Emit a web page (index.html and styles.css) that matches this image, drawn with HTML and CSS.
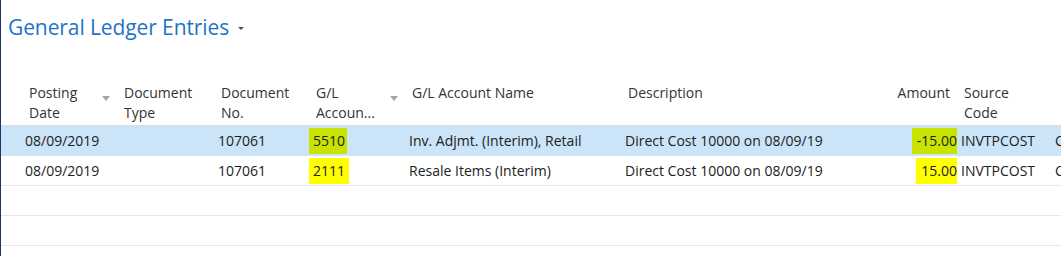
FILE: index.html
```html
<!DOCTYPE html>
<html lang="en">
<head>
    <meta charset="UTF-8">
    <title>General Ledger Entries</title>
    <link rel="stylesheet" href="styles.css">
</head>
<body>
    <div class="page">
        <div class="title-bar">
            <h1>General Ledger Entries</h1>
            <span class="title-caret"></span>
        </div>

        <table class="entries">
            <colgroup>
                <col class="c-date">
                <col class="c-type">
                <col class="c-docno">
                <col class="c-acc">
                <col class="c-name">
                <col class="c-desc">
                <col class="c-amt">
                <col class="c-src">
                <col class="c-more">
            </colgroup>
            <thead>
                <tr>
                    <th class="first"><div class="th-in"><span>Posting<br>Date</span><i class="sort"></i></div></th>
                    <th>Document<br>Type</th>
                    <th>Document<br>No.</th>
                    <th><div class="th-in"><span>G/L<br>Accoun...</span><i class="sort"></i></div></th>
                    <th>G/L Account Name</th>
                    <th>Description</th>
                    <th class="num">Amount</th>
                    <th>Source<br>Code</th>
                    <th></th>
                </tr>
            </thead>
            <tbody>
                <tr class="selected">
                    <td class="first">08/09/2019</td>
                    <td></td>
                    <td>107061</td>
                    <td><span class="mark mark-a">5510</span></td>
                    <td>Inv. Adjmt. (Interim), Retail</td>
                    <td>Direct Cost 10000 on 08/09/19</td>
                    <td class="num"><span class="mark mark-c">-15.00</span></td>
                    <td>INVTPCOST</td>
                    <td>C</td>
                </tr>
                <tr>
                    <td class="first">08/09/2019</td>
                    <td></td>
                    <td>107061</td>
                    <td><span class="mark mark-b">2111</span></td>
                    <td>Resale Items (Interim)</td>
                    <td>Direct Cost 10000 on 08/09/19</td>
                    <td class="num"><span class="mark mark-d">15.00</span></td>
                    <td>INVTPCOST</td>
                    <td>C</td>
                </tr>
                <tr class="empty"><td colspan="9"></td></tr>
                <tr class="empty"><td colspan="9"></td></tr>
            </tbody>
        </table>
    </div>
</body>
</html>
```

FILE: styles.css
```css
body {
    margin: 0;
    font-family: "Open Sans", "Noto Sans", Arial, sans-serif;
    background: #fff;
    color: #212121;
}
.page {
    width: 1060px;
    height: 256px;
    border-left: 1px solid #1f3566;
    overflow: hidden;
}
.title-bar {
    display: flex;
    align-items: center;
    padding: 11px 0 0 7px;
    height: 32px;
}
h1 {
    margin: 0;
    font-size: 21px;
    font-weight: 400;
    color: #1e73c8;
    letter-spacing: -0.1px;
}
.title-caret {
    width: 0;
    height: 0;
    margin: 2px 0 0 9px;
    border-left: 3px solid transparent;
    border-right: 3px solid transparent;
    border-top: 3px solid #555;
}
.entries {
    margin-top: 35px;
    table-layout: fixed;
    border-collapse: collapse;
    width: 1260px;
    font-size: 14px;
}
.c-date { width: 116px; }
.c-type { width: 97px; }
.c-docno { width: 95px; }
.c-acc { width: 96px; }
.c-name { width: 216px; }
.c-desc { width: 236px; }
.c-amt { width: 100px; }
.c-src { width: 94px; }
.c-more { width: 210px; }
th {
    text-align: left;
    vertical-align: top;
    font-weight: 400;
    color: #333;
    line-height: 20px;
    padding: 5px 4px 2px 7px;
    border-bottom: 1px solid #dcdcdc;
    white-space: nowrap;
}
th.first { padding-left: 28px; }
th.num { text-align: right; padding-right: 7px; }
.th-in {
    display: flex;
    justify-content: space-between;
}
.sort {
    width: 0;
    height: 0;
    margin: 13px 3px 0 0;
    border-left: 4px solid transparent;
    border-right: 4px solid transparent;
    border-top: 5px solid #a6a6a6;
}
td {
    height: 29px;
    padding: 0 4px;
    border-bottom: 1px solid #e6e6e6;
    white-space: nowrap;
    overflow: hidden;
}
td.first { padding-left: 24px; }
td.num { text-align: right; }
tr.selected td {
    background: #cce4f7;
    border-bottom-color: #cce4f7;
}
.mark {
    display: inline-block;
    line-height: 26px;
    padding: 0 2px 0 5px;
    margin-left: -5px;
}
.mark-a { background: #c9e300; }
.mark-b { background: #ffff00; margin-left: -9px; padding-left: 9px; padding-right: 4px; }
.mark-c { background: #c9e300; margin-right: -4px; padding-right: 0; }
.mark-d { background: #ffff00; margin-right: -9px; padding-right: 5px; }
```
